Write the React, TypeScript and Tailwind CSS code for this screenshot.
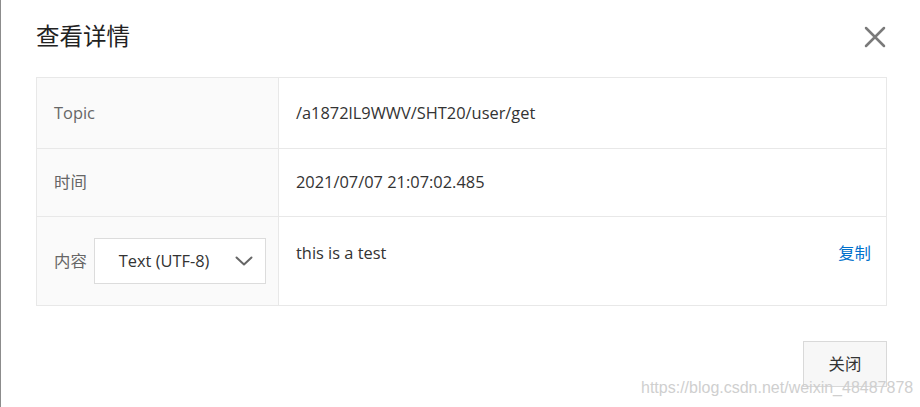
import React from 'react';

const font = { fontFamily: '"Open Sans", "Noto Sans CJK SC", sans-serif' };

const ChevronDown: React.FC = () => (
  <svg width="18" height="10" viewBox="0 0 18 10" fill="none">
    <path d="M1.5 1.5 L9 8.5 L16.5 1.5" stroke="#666" strokeWidth="2" strokeLinecap="round" strokeLinejoin="round" />
  </svg>
);

const CloseIcon: React.FC = () => (
  <svg width="22" height="22" viewBox="0 0 22 22" fill="none">
    <path d="M2 2 L20 20 M20 2 L2 20" stroke="#7a7a7a" strokeWidth="2.5" strokeLinecap="round" />
  </svg>
);

const App: React.FC = () => {
  return (
    <div
      className="relative w-[920px] h-[407px] overflow-hidden bg-white border-l border-[#8c8c8c] text-[#333]"
      style={font}
    >
      {/* header */}
      <div className="flex items-center justify-between pl-[35px] pr-[33px] pt-[16px] h-[77px] pb-[20px]">
        <h2 className="text-[23.5px] leading-none text-[#222]">查看详情</h2>
        <button className="flex items-center justify-center w-[24px] h-[24px]">
          <CloseIcon />
        </button>
      </div>

      {/* details table */}
      <div className="ml-[35px] mr-[33px] border border-[#e8e8e8] text-[16.4px]">
        <div className="flex h-[71px] border-b border-[#e8e8e8]">
          <div className="w-[242px] flex items-center pl-[17px] bg-[#fafafa] border-r border-[#e8e8e8] text-[#666]">
            Topic
          </div>
          <div className="flex-1 flex items-center pl-[17px]">/a1872lL9WWV/SHT20/user/get</div>
        </div>
        <div className="flex h-[68px] border-b border-[#e8e8e8]">
          <div className="w-[242px] flex items-center pl-[17px] bg-[#fafafa] border-r border-[#e8e8e8] text-[#666]">
            时间
          </div>
          <div className="flex-1 flex items-center pl-[17px]">2021/07/07 21:07:02.485</div>
        </div>
        <div className="flex h-[88px]">
          <div className="w-[242px] flex items-center pl-[17px] bg-[#fafafa] border-r border-[#e8e8e8] text-[#666] gap-[7px]">
            <span>内容</span>
            <div className="flex items-center justify-between w-[172px] h-[46px] bg-white border border-[#dcdcdc] pl-[24px] pr-[12px] text-[#333]">
              <span>Text (UTF-8)</span>
              <ChevronDown />
            </div>
          </div>
          <div className="flex-1 flex items-start justify-between pl-[17px] pr-[15px] pt-[24px]">
            <span>this is a test</span>
            <span className="text-[#0070cc]">复制</span>
          </div>
        </div>
      </div>

      {/* footer */}
      <div className="flex justify-end ml-[33px] mr-[33px] mt-[35px]">
        <button className="w-[84px] h-[46px] border border-[#d9d9d9] bg-[#f7f7f7] text-[16.4px] text-[#333]">
          关闭
        </button>
      </div>

      <div
        className="absolute left-[640px] top-[376px] text-[16px] text-[#cfcfcf] whitespace-nowrap pointer-events-none"
        style={{ fontFamily: '"Liberation Sans", Arial, sans-serif' }}
      >
        https://blog.csdn.net/weixin_48487878
      </div>
    </div>
  );
};

export default App;
